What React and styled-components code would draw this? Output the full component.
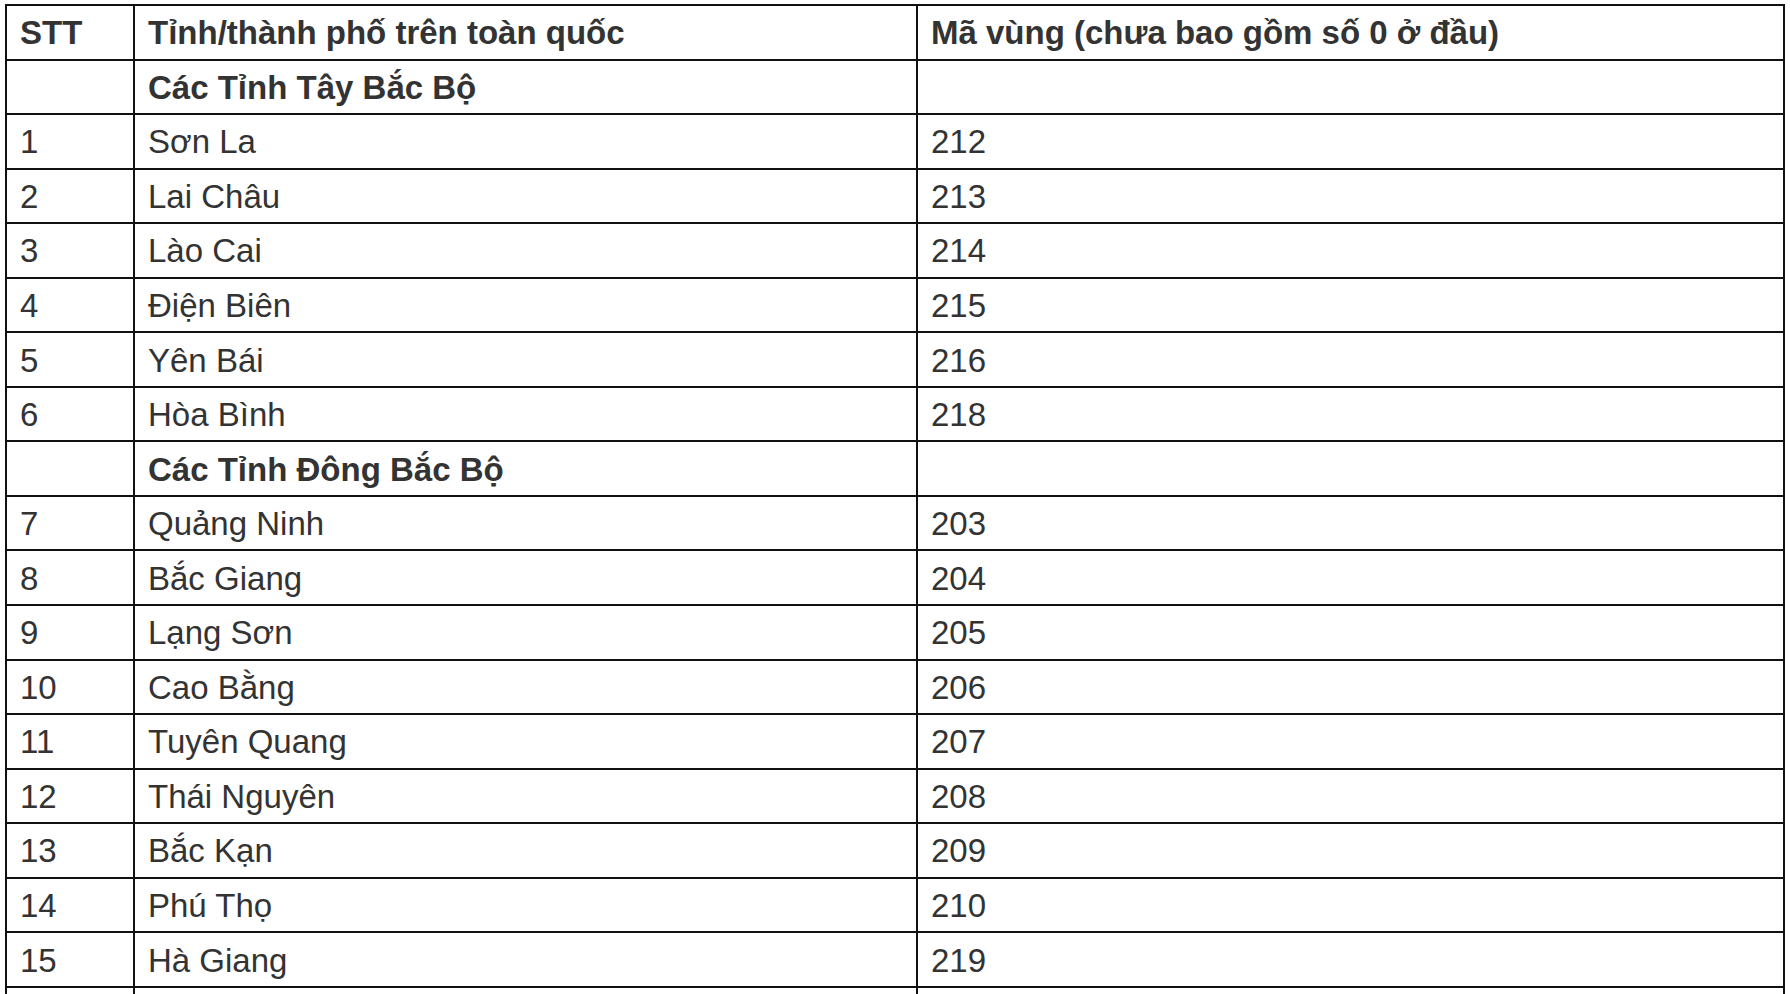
import React from "react";
import styled, { createGlobalStyle } from "styled-components";

const rows = [
  { group: "Các Tỉnh Tây Bắc Bộ" },
  { no: "1", name: "Sơn La", code: "212" },
  { no: "2", name: "Lai Châu", code: "213" },
  { no: "3", name: "Lào Cai", code: "214" },
  { no: "4", name: "Điện Biên", code: "215" },
  { no: "5", name: "Yên Bái", code: "216" },
  { no: "6", name: "Hòa Bình", code: "218" },
  { group: "Các Tỉnh Đông Bắc Bộ" },
  { no: "7", name: "Quảng Ninh", code: "203" },
  { no: "8", name: "Bắc Giang", code: "204" },
  { no: "9", name: "Lạng Sơn", code: "205" },
  { no: "10", name: "Cao Bằng", code: "206" },
  { no: "11", name: "Tuyên Quang", code: "207" },
  { no: "12", name: "Thái Nguyên", code: "208" },
  { no: "13", name: "Bắc Kạn", code: "209" },
  { no: "14", name: "Phú Thọ", code: "210" },
  { no: "15", name: "Hà Giang", code: "219" },
  { group: "" },
];

const App = () => {
  return (
    <>
      <GlobalStyle />
      <Table>
        <Row>
          <Cell bold>STT</Cell>
          <Cell bold>Tỉnh/thành phố trên toàn quốc</Cell>
          <Cell bold>Mã vùng (chưa bao gồm số 0 ở đầu)</Cell>
        </Row>
        {rows.map((r, i) =>
          r.group !== undefined ? (
            <Row key={i}>
              <Cell />
              <Cell bold>{r.group}</Cell>
              <Cell />
            </Row>
          ) : (
            <Row key={i}>
              <Cell>{r.no}</Cell>
              <Cell>{r.name}</Cell>
              <Cell>{r.code}</Cell>
            </Row>
          )
        )}
      </Table>
    </>
  );
};

const GlobalStyle = createGlobalStyle`
  html, body {
    margin: 0;
    padding: 0;
    background: #ffffff;
  }
  body {
    font-family: "Liberation Sans", Arial, sans-serif;
    color: #333333;
  }
`;

const Table = styled.div`
  margin: 4px 0 0 5px;
  width: 1780px;
  box-sizing: border-box;
  border-top: 2px solid #111;
  border-left: 2px solid #111;
`;

const Row = styled.div`
  display: grid;
  grid-template-columns: 128px 783px 867px;
  height: 54.55px;
`;

const Cell = styled.div`
  box-sizing: border-box;
  display: flex;
  align-items: center;
  padding: 2px 12px 0 13px;
  border-right: 2px solid #111;
  border-bottom: 2px solid #111;
  font-size: 33px;
  font-weight: ${(p) => (p.bold ? 700 : 400)};
  white-space: nowrap;
  overflow: hidden;
`;

export default App;
